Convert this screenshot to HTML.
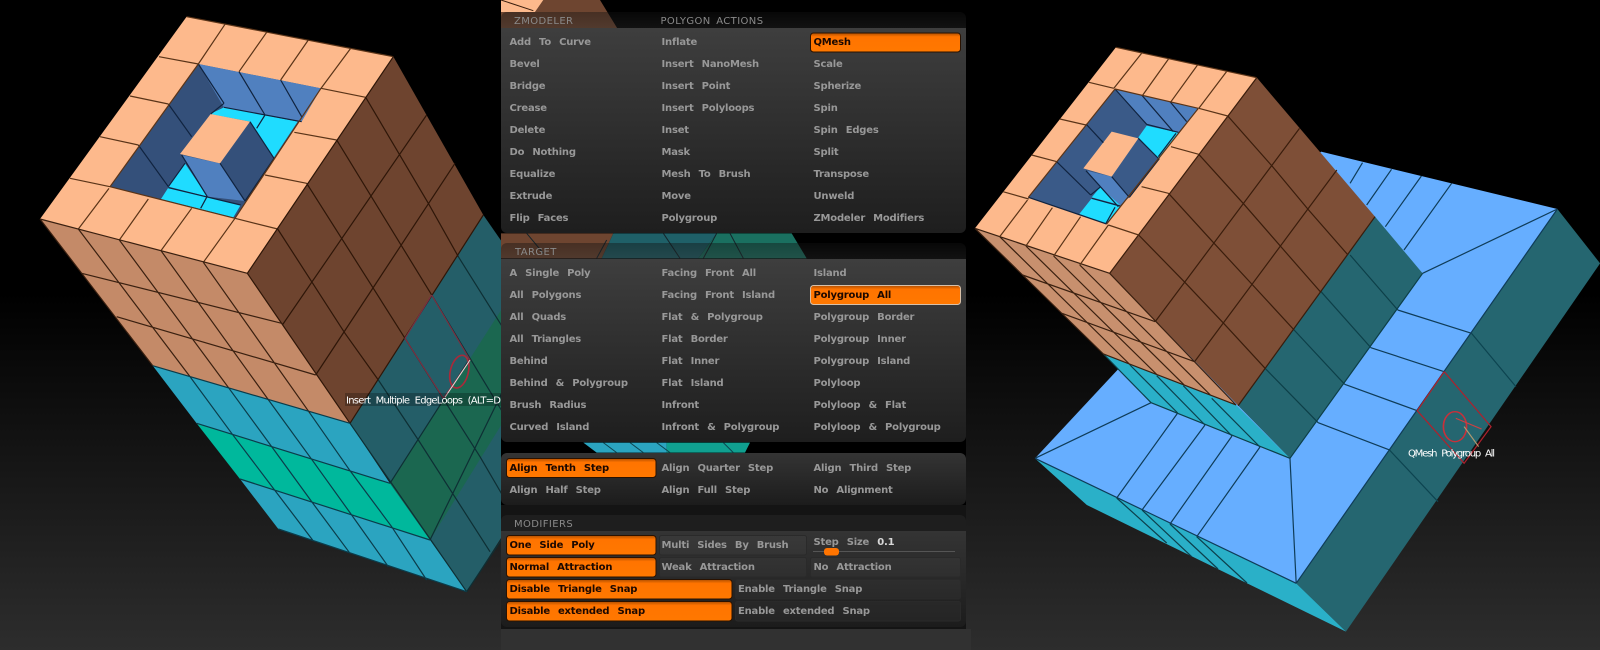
<!DOCTYPE html>
<html><head><meta charset="utf-8"><style>
html,body{margin:0;padding:0;background:#000}
svg{display:block}
text{font-family:"DejaVu Sans","Liberation Sans",sans-serif}
.t text,text.t{font-size:10px;font-weight:700;fill:#989898;letter-spacing:-.2px;word-spacing:4.8px}
.o text,text.o{font-size:10px;font-weight:700;fill:#1c0800;letter-spacing:-.2px;word-spacing:4.8px}
.h{font-size:10px;font-weight:400;fill:#8a8a8a;letter-spacing:.4px;word-spacing:2px}
.l *{vector-effect:non-scaling-stroke;fill:none;stroke-width:1.2}
.lab{font-size:10px;fill:#fff;word-spacing:3px}
</style></head><body>
<svg width="1600" height="650" viewBox="0 0 1600 650" xmlns="http://www.w3.org/2000/svg">
<defs>
<linearGradient id="bg" x1="0" y1="0" x2="0" y2="1"><stop offset=".45" stop-color="#000"/><stop offset="1" stop-color="#2d2d2d"/></linearGradient>
<linearGradient id="pb" x1="0" y1="0" x2="0" y2="1"><stop offset="0" stop-color="#3e3e3e"/><stop offset="1" stop-color="#1e1e1e"/></linearGradient>
<linearGradient id="pc" x1="0" y1="0" x2="0" y2="1"><stop offset="0" stop-color="#343434"/><stop offset="1" stop-color="#1c1c1c"/></linearGradient>
<linearGradient id="ph" x1="0" y1="0" x2="0" y2="1"><stop offset="0" stop-color="#111"/><stop offset="1" stop-color="#2a2a2a"/></linearGradient>
<linearGradient id="or" x1="0" y1="0" x2="0" y2="1"><stop offset="0" stop-color="#b04e00"/><stop offset=".2" stop-color="#ff7400"/><stop offset="1" stop-color="#ff7800"/></linearGradient>
<clipPath id="cl"><rect x="0" y="0" width="501" height="650"/></clipPath>
<clipPath id="cr"><rect x="966" y="0" width="634" height="650"/></clipPath>
</defs>
<rect width="1600" height="650" fill="url(#bg)"/>

<!-- LEFT CUBE -->
<g clip-path="url(#cl)"><g transform="scale(.33333)">
<polygon fill="#fdb98c" points="560,50 1180,170 742,820 120,657"/>
<polygon fill="#6e442f" points="1180,170 1450,645 1050,1270 742,820"/>
<polygon fill="#c48a68" points="120,657 742,820 1050,1270 458,1097"/>
<polygon fill="#245e68" points="1450,645 1800,1150 1400,1775 1050,1270"/>
<polygon fill="#1b6750" points="1170,1450 1510,920 1510,1265 1290,1620"/>
<polygon fill="#2ba4c0" points="458,1097 1050,1270 1170,1450 590,1270"/>
<polygon fill="#00b89c" points="590,1270 1170,1450 1290,1620 720,1437"/>
<polygon fill="#2ba4c0" points="720,1437 1290,1620 1400,1775 835,1587"/>
<!-- hole -->
<polygon fill="#34507a" points="595,192 963,265 705,655 330,560"/>
<polygon fill="#5080bf" points="595,192 963,265 905,365 672,322"/>
<polygon fill="#1fdcff" points="672,322 893,365 822,472 750,365 630,342"/>
<polygon fill="#1fdcff" points="555,490 622,590 505,560"/>
<polygon fill="#1fdcff" points="505,563 722,615 700,652 483,597"/>
<polygon fill="#5080bf" points="545,465 660,490 735,603 622,590"/>
<polygon fill="#fdb98c" points="632,342 750,365 660,490 540,462"/>
<g class="l">
<path stroke="#10233f" d="M595 192L672 310M505 312L575 410M415 435L505 560M717 215L795 345M842 240L905 350M672 322L905 365M795 345L770 385M750 365L822 475L735 603M660 490L735 603M545 465L622 590M505 563L722 615M620 592L602 625M672 310L632 342M555 490L505 560"/>
</g>
<g class="l"><path stroke="#5a3418" d="M560 50L1180 170M675 73L595 192M800 97L717 215M925 120L842 240M1052 145L963 265M235 687L327 565M358 720L445 597M483 752L575 625M610 787L705 655M477 170L595 192M390 288L505 312M300 410L415 435M210 535L330 560M963 265L1097 292M883 397L1010 420M795 525L920 550M705 655L833 687M595 192L330 560M330 560L705 655M705 655L963 265"/></g>
<g class="l"><path stroke="#2e1608" d="M1180 170L742 820M1097 292L1285 610L1375 770M1010 420L1295 885M920 550L1120 865L1215 1015M833 687L1035 1000L1135 1140M1280 345L847 975M1365 490L947 1125M1450 645L1050 1270M742 820L1050 1270"/></g>
<g class="l"><path stroke="#3a2010" d="M120 657L742 820M235 687L570 1130M358 720L687 1165M483 752L807 1202M610 787L930 1240M245 820L845 970M350 950L947 1125M120 657L458 1097"/></g>
<g class="l"><path stroke="#0e2f34" d="M1375 770L1510 985M1295 885L1510 1240M1215 1015L1440 1370L1510 1490M1135 1140L1255 1320L1470 1655M1050 1270L1400 1775M1410 1075L1170 1450M1510 1170L1290 1620M1510 1610L1400 1775"/></g>
<g class="l"><path stroke="#0b3c4a" d="M458 1097L1050 1270M590 1270L1170 1450M720 1437L1290 1620M835 1587L1400 1775M570 1130L695 1300L820 1465L940 1623M687 1165L815 1340L935 1505L1050 1660M807 1202L935 1378L1055 1545L1165 1700M930 1240L1050 1412L1175 1580L1280 1740"/></g>
<g class="l"><path stroke="#7a3040" d="M1295 885L1410 1080L1330 1195L1215 1015L1295 885"/></g>
<ellipse cx="1378" cy="1115" rx="27" ry="50" transform="rotate(14 1378 1115)" fill="none" stroke="#a82a3a" stroke-width="5"/>
<line x1="1410" y1="1080" x2="1335" y2="1192" stroke="#e8d8d8" stroke-width="3"/>
</g>
<rect x="345" y="393" width="156" height="13" fill="#000" opacity=".25"/>
<text class="lab" x="346" y="403.5" textLength="155">Insert Multiple EdgeLoops (ALT=D</text>
</g>

<!-- RIGHT CUBE -->
<g clip-path="url(#cr)"><g transform="translate(950,30) scale(.4146,.33333)">
<polygon fill="#66aeff" points="895,365 1465,537 835,1660 205,1285"/>
<polygon fill="#256670" points="1465,537 1568,700 955,1805 835,1660"/>
<polygon fill="#2ab0c8" points="205,1285 835,1660 955,1805 330,1425"/>
<g class="l"><path stroke="#0f3c58" d="M995 398L965 460M1065 418L1005 525M1137 438L1050 590M1210 460L1095 660M1140 730L1465 537M1080 840L1258 910M1015 953L1192 1025M952 1063L1127 1142M888 1178L1060 1260M205 1285L485 1118M820 1285L835 1660M1465 537L835 1660M205 1285L835 1660"/></g>
<g class="l"><path stroke="#0d4450" d="M1258 910L1365 1070M1060 1260L1177 1415"/></g>
<polygon fill="#256670" points="1025,560 1140,730 820,1285 695,1127"/>
<polygon fill="#2ab0c8" points="370,972 690,1125 820,1285 485,1118"/>
<g class="l"><path stroke="#0d3f48" d="M965 675L1080 840M895 785L1015 953M830 900L952 1063M760 1015L888 1178M1025 560L695 1127M1140 730L820 1285M370 972L485 1118M485 1118L820 1285"/></g>
<polygon fill="#7e4f37" points="740,143 1025,560 695,1127 385,730"/>
<polygon fill="#c8906e" points="60,595 385,730 690,1125 370,972"/>
<polygon fill="#fdb98c" points="400,52 740,143 385,730 60,595"/>
<g class="l"><path stroke="#5a3418" d="M400 52L740 143"/></g>
<g class="l"><path stroke="#3a1d0c" d="M670 258L778 410L865 540L960 675M600 373L707 520L798 650L893 785M527 490L637 640L730 765L830 900M455 615L565 755L660 880L760 1015M843 295L495 875M933 420L590 995M1025 560L695 1127M740 143L385 730"/></g>
<g class="l"><path stroke="#3a2010" d="M60 595L385 730M120 620L435 1005M183 648L500 1035M250 678L565 1065M313 705L628 1095M175 735L495 875M270 850L590 995M385 730L690 1125M60 595L370 972M370 972L690 1125"/></g>
<g class="l"><path stroke="#b0202c" d="M1192 1025L1305 1190L1240 1300L1127 1142L1192 1025"/></g>
<ellipse cx="1218" cy="1190" rx="28" ry="45" fill="none" stroke="#c8303a" stroke-width="4"/>
<path d="M1220 1165L1282 1197" stroke="#d04040" stroke-width="3" fill="none"/>
<path d="M1240 1190L1275 1250" stroke="#b09a70" stroke-width="3" fill="none"/>
</g>
<!-- floor & band lines in real px -->
<g class="l">
<path stroke="#0f3c58" d="M1177.700 413L1116.700 498M1205 425L1142 510M1232 436L1170 524M1260 447L1196.700 536.700"/>
<path stroke="#0c3f4c" d="M1130 365L1177.700 413M1156.700 375.700L1205 425M1183.300 385.700L1232 436M1211.700 398.300L1260 447M1116.700 498L1166.700 543M1142 510L1191.700 556.700M1170 524L1218 569M1196.700 536.700L1247 583"/>
</g>
<!-- right hole -->
<g transform="translate(1000,60) scale(.33333)">
<polygon fill="#3a5a88" points="345,87 595,145 320,492 85,412"/>
<polygon fill="#5080bf" points="345,87 595,145 535,217 440,193"/>
<polygon fill="#1fdcff" points="440,197 535,218 477,297 415,232"/>
<polygon fill="#5080bf" points="258,332 335,350 388,412 355,440 300,382"/>
<polygon fill="#1fdcff" points="300,382 360,435 275,412"/>
<polygon fill="#1fdcff" points="275,415 362,438 320,492 238,462"/>
<polygon fill="#fdb98c" points="335,215 415,235 335,350 250,325"/>
<g class="l">
<path stroke="#10233f" d="M345 87L440 193L535 217M425 105L520 215M510 125L560 185M258 192L310 248M170 305L272 405M415 235L477 297L388 412M335 350L388 412M258 332L355 440M275 415L360 438M528 220L475 290M345 442L318 490M85 412L320 492M300 382L272 405"/>
<path stroke="#5a3418" d="M345 87L85 412M595 145L320 492M345 87L595 145"/>
</g>
</g>
<g transform="translate(950,30) scale(.4146,.33333)" class="l"><path stroke="#5a3418" d="M462 70L395 175M527 87L465 195M597 105L533 215M667 125L600 235M120 620L187 510M183 648L247 533M250 678L315 560M313 705L382 585M335 157L395 175M265 267L328 285M197 375L258 395M128 485L190 507M600 235L670 258M533 350L600 373M462 470L527 490M382 585L455 615"/></g>
<text class="lab" x="1408" y="456.500" textLength="87">QMesh Polygroup All</text>
</g>

<!-- CENTER BACK -->
<rect x="501" y="0" width="465" height="650" fill="#000"/>
<rect x="501" y="505" width="465" height="145" fill="#141414"/>
<rect x="501" y="629" width="470" height="21" fill="#313131"/>
<g transform="translate(490,0) scale(.33333)">
<polygon fill="#6e4530" points="160,0 330,0 382,85 33,85 33,36 135,36"/>
<polygon fill="#fdb98c" points="33,0 160,0 135,36 33,36"/>
<path d="M33 0L130 32" stroke="#3a1d0c" stroke-width="3"/>
<polygon fill="#6e4530" points="33,700 370,700 335,775 33,775"/>
<polygon fill="#1f6068" points="370,700 680,700 625,775 335,775"/>
<polygon fill="#1a7060" points="680,700 905,700 950,775 625,775"/>
<path d="M110 700L160 760M350 720L320 775M520 700L570 775M680 700L640 775M720 700L760 775" stroke="#15242a" stroke-width="3" fill="none"/>
<polygon fill="#2ba4c0" points="280,1328 530,1328 530,1358 320,1358"/>
<polygon fill="#10a090" points="530,1328 780,1328 765,1358 530,1358"/>
<path d="M340 1328L380 1358M420 1328L460 1358M500 1328L540 1358M700 1328L730 1358" stroke="#0d4450" stroke-width="3" fill="none"/>
</g>

<!-- PANEL 1 -->
<path d="M507 12H960a6 6 0 0 1 6 6V28H501V18a6 6 0 0 1 6-6Z" fill="url(#ph)" opacity=".42"/>
<path d="M501 28H966V227a6 6 0 0 1-6 6H507a6 6 0 0 1-6-6Z" fill="url(#pb)"/>
<text class="h" x="514" y="24">ZMODELER</text><text class="h" x="660.5" y="24">POLYGON ACTIONS</text>
<rect x="810.5" y="33" width="150" height="19" rx="3" fill="url(#or)" stroke="#2a1200"/>
<g class="t">
<text x="509.5" y="45">Add To Curve</text><text x="509.5" y="67">Bevel</text><text x="509.5" y="89">Bridge</text><text x="509.5" y="111">Crease</text><text x="509.5" y="133">Delete</text><text x="509.5" y="155">Do Nothing</text><text x="509.5" y="177">Equalize</text><text x="509.5" y="199">Extrude</text><text x="509.5" y="221">Flip Faces</text>
<text x="661.5" y="45">Inflate</text><text x="661.5" y="67">Insert NanoMesh</text><text x="661.5" y="89">Insert Point</text><text x="661.5" y="111">Insert Polyloops</text><text x="661.5" y="133">Inset</text><text x="661.5" y="155">Mask</text><text x="661.5" y="177">Mesh To Brush</text><text x="661.5" y="199">Move</text><text x="661.5" y="221">Polygroup</text>
<text x="813.5" y="67">Scale</text><text x="813.5" y="89">Spherize</text><text x="813.5" y="111">Spin</text><text x="813.5" y="133">Spin Edges</text><text x="813.5" y="155">Split</text><text x="813.5" y="177">Transpose</text><text x="813.5" y="199">Unweld</text><text x="813.5" y="221">ZModeler Modifiers</text>
</g>
<text class="o" x="813.5" y="45">QMesh</text>

<!-- PANEL 2 -->
<path d="M507 243H960a6 6 0 0 1 6 6V259H501V249a6 6 0 0 1 6-6Z" fill="url(#ph)" opacity=".42"/>
<path d="M501 259H966V436a6 6 0 0 1-6 6H507a6 6 0 0 1-6-6Z" fill="url(#pb)"/>
<text class="h" x="515" y="255">TARGET</text>
<rect x="810.5" y="285.5" width="150" height="19" rx="3" fill="url(#or)" stroke="#d8c0a8"/>
<g class="t">
<text x="509.5" y="276">A Single Poly</text><text x="509.5" y="298">All Polygons</text><text x="509.5" y="320">All Quads</text><text x="509.5" y="342">All Triangles</text><text x="509.5" y="364">Behind</text><text x="509.5" y="386">Behind &amp; Polygroup</text><text x="509.5" y="408">Brush Radius</text><text x="509.5" y="430">Curved Island</text>
<text x="661.5" y="276">Facing Front All</text><text x="661.5" y="298">Facing Front Island</text><text x="661.5" y="320">Flat &amp; Polygroup</text><text x="661.5" y="342">Flat Border</text><text x="661.5" y="364">Flat Inner</text><text x="661.5" y="386">Flat Island</text><text x="661.5" y="408">Infront</text><text x="661.5" y="430">Infront &amp; Polygroup</text>
<text x="813.5" y="276">Island</text><text x="813.5" y="320">Polygroup Border</text><text x="813.5" y="342">Polygroup Inner</text><text x="813.5" y="364">Polygroup Island</text><text x="813.5" y="386">Polyloop</text><text x="813.5" y="408">Polyloop &amp; Flat</text><text x="813.5" y="430">Polyloop &amp; Polygroup</text>
</g>
<text class="o" x="813.5" y="298">Polygroup All</text>

<!-- PANEL 3 -->
<rect x="501" y="453" width="465" height="52" rx="6" fill="url(#pc)"/>
<rect x="506.5" y="458.5" width="149.500" height="19" rx="3" fill="url(#or)" stroke="#2a1200"/>
<text class="o" x="509.5" y="471">Align Tenth Step</text>
<g class="t">
<text x="509.5" y="493">Align Half Step</text><text x="661.5" y="471">Align Quarter Step</text><text x="661.5" y="493">Align Full Step</text><text x="813.5" y="471">Align Third Step</text><text x="813.5" y="493">No Alignment</text>
</g>

<!-- PANEL 4 -->
<path d="M507 515H960a6 6 0 0 1 6 6V531H501V521a6 6 0 0 1 6-6Z" fill="#1e1e1e"/>
<path d="M501 531H966V621a6 6 0 0 1-6 6H507a6 6 0 0 1-6-6Z" fill="url(#pc)"/>
<text class="h" x="514" y="527">MODIFIERS</text>
<g fill="#ffffff" fill-opacity=".03" stroke="#2a2a2a">
<rect x="659.500" y="535.500" width="147" height="19.500" rx="2"/>
<rect x="659.500" y="557.500" width="147" height="19.500" rx="2"/>
<rect x="810.500" y="557.500" width="150" height="19.500" rx="2"/>
<rect x="735.500" y="579.500" width="225" height="19.500" rx="2"/>
<rect x="735.500" y="601.500" width="225" height="19.500" rx="2"/>
</g>
<g fill="url(#or)" stroke="#2a1200">
<rect x="506.500" y="535.500" width="149.500" height="19.500" rx="3"/>
<rect x="506.500" y="557.500" width="149.500" height="19.500" rx="3"/>
<rect x="506.500" y="579.500" width="225.500" height="19.500" rx="3"/>
<rect x="506.500" y="601.500" width="225.500" height="19.500" rx="3"/>
</g>
<g class="o">
<text x="509.5" y="548">One Side Poly</text><text x="509.5" y="570">Normal Attraction</text><text x="509.5" y="592">Disable Triangle Snap</text><text x="509.5" y="614">Disable extended Snap</text>
</g>
<g class="t">
<text x="661.5" y="548">Multi Sides By Brush</text><text x="661.5" y="570">Weak Attraction</text><text x="813.5" y="570">No Attraction</text><text x="738" y="592">Enable Triangle Snap</text><text x="738" y="614">Enable extended Snap</text>
<text x="813.5" y="545">Step Size <tspan fill="#d8d8d8">0.1</tspan></text>
</g>
<line x1="813" y1="551.500" x2="955" y2="551.500" stroke="#555"/>
<rect x="824" y="548" width="15" height="7.500" rx="3" fill="#ff7400"/>
</svg>
</body></html>
